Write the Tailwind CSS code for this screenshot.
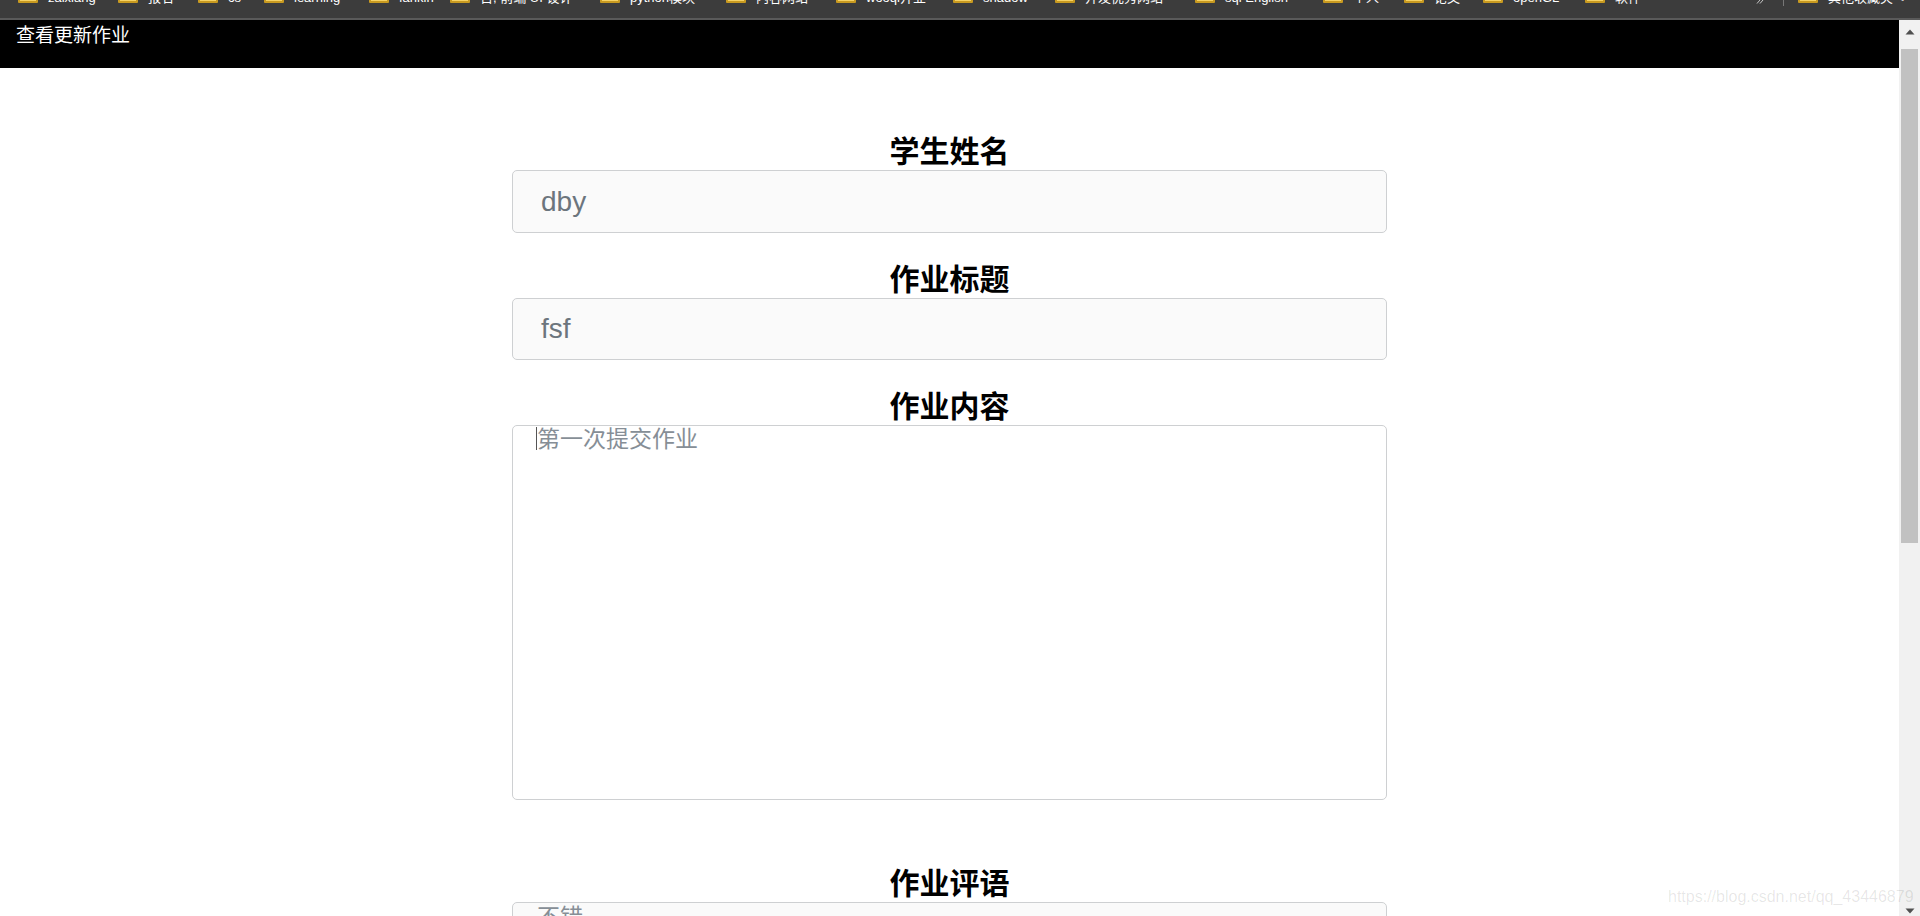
<!doctype html>
<html lang="zh">
<head>
<meta charset="utf-8">
<title>查看更新作业</title>
<script src="https://cdn.jsdelivr.net/npm/@tailwindcss/browser@4"></script>
</head>
<body class="bg-white overflow-hidden font-['Liberation_Sans','Noto_Sans_CJK_SC',sans-serif]">
<div class="relative h-[916px] w-[1920px] overflow-hidden flex flex-col">
  <!-- browser bookmark bar -->
  <div class="h-[20px] shrink-0 bg-[#3c3c3c] border-b-2 border-[#5a5a5a] overflow-hidden flex pl-[18px] text-[13px] text-white">
    <div class="w-[100px] h-[20px] -mt-[17px] flex items-end gap-2.5 shrink-0"><span class="w-5 h-4 shrink-0 bg-[#f6d263] border-2 border-[#c89a20] rounded-[1px]"></span><span class="leading-[20px] -mb-[5px] whitespace-nowrap">zaixiang</span></div>
    <div class="w-[80px] h-[20px] -mt-[17px] flex items-end gap-2.5 shrink-0"><span class="w-5 h-4 shrink-0 bg-[#f6d263] border-2 border-[#c89a20] rounded-[1px]"></span><span class="leading-[20px] -mb-[5px] whitespace-nowrap">报名</span></div>
    <div class="w-[66px] h-[20px] -mt-[17px] flex items-end gap-2.5 shrink-0"><span class="w-5 h-4 shrink-0 bg-[#f6d263] border-2 border-[#c89a20] rounded-[1px]"></span><span class="leading-[20px] -mb-[5px] whitespace-nowrap">cs</span></div>
    <div class="w-[105px] h-[20px] -mt-[17px] flex items-end gap-2.5 shrink-0"><span class="w-5 h-4 shrink-0 bg-[#f6d263] border-2 border-[#c89a20] rounded-[1px]"></span><span class="leading-[20px] -mb-[5px] whitespace-nowrap">learning</span></div>
    <div class="w-[81px] h-[20px] -mt-[17px] flex items-end gap-2.5 shrink-0"><span class="w-5 h-4 shrink-0 bg-[#f6d263] border-2 border-[#c89a20] rounded-[1px]"></span><span class="leading-[20px] -mb-[5px] whitespace-nowrap">fankin</span></div>
    <div class="w-[150px] h-[20px] -mt-[17px] flex items-end gap-2.5 shrink-0"><span class="w-5 h-4 shrink-0 bg-[#f6d263] border-2 border-[#c89a20] rounded-[1px]"></span><span class="leading-[20px] -mb-[5px] whitespace-nowrap">百, 前端 UI 设计</span></div>
    <div class="w-[126px] h-[20px] -mt-[17px] flex items-end gap-2.5 shrink-0"><span class="w-5 h-4 shrink-0 bg-[#f6d263] border-2 border-[#c89a20] rounded-[1px]"></span><span class="leading-[20px] -mb-[5px] whitespace-nowrap">python模块</span></div>
    <div class="w-[110px] h-[20px] -mt-[17px] flex items-end gap-2.5 shrink-0"><span class="w-5 h-4 shrink-0 bg-[#f6d263] border-2 border-[#c89a20] rounded-[1px]"></span><span class="leading-[20px] -mb-[5px] whitespace-nowrap">内容网站</span></div>
    <div class="w-[117px] h-[20px] -mt-[17px] flex items-end gap-2.5 shrink-0"><span class="w-5 h-4 shrink-0 bg-[#f6d263] border-2 border-[#c89a20] rounded-[1px]"></span><span class="leading-[20px] -mb-[5px] whitespace-nowrap">wooqi开业</span></div>
    <div class="w-[102px] h-[20px] -mt-[17px] flex items-end gap-2.5 shrink-0"><span class="w-5 h-4 shrink-0 bg-[#f6d263] border-2 border-[#c89a20] rounded-[1px]"></span><span class="leading-[20px] -mb-[5px] whitespace-nowrap">shadow</span></div>
    <div class="w-[140px] h-[20px] -mt-[17px] flex items-end gap-2.5 shrink-0"><span class="w-5 h-4 shrink-0 bg-[#f6d263] border-2 border-[#c89a20] rounded-[1px]"></span><span class="leading-[20px] -mb-[5px] whitespace-nowrap">开发优秀网站</span></div>
    <div class="w-[128px] h-[20px] -mt-[17px] flex items-end gap-2.5 shrink-0"><span class="w-5 h-4 shrink-0 bg-[#f6d263] border-2 border-[#c89a20] rounded-[1px]"></span><span class="leading-[20px] -mb-[5px] whitespace-nowrap">sql English</span></div>
    <div class="w-[81px] h-[20px] -mt-[17px] flex items-end gap-2.5 shrink-0"><span class="w-5 h-4 shrink-0 bg-[#f6d263] border-2 border-[#c89a20] rounded-[1px]"></span><span class="leading-[20px] -mb-[5px] whitespace-nowrap">个人</span></div>
    <div class="w-[79px] h-[20px] -mt-[17px] flex items-end gap-2.5 shrink-0"><span class="w-5 h-4 shrink-0 bg-[#f6d263] border-2 border-[#c89a20] rounded-[1px]"></span><span class="leading-[20px] -mb-[5px] whitespace-nowrap">论文</span></div>
    <div class="w-[102px] h-[20px] -mt-[17px] flex items-end gap-2.5 shrink-0"><span class="w-5 h-4 shrink-0 bg-[#f6d263] border-2 border-[#c89a20] rounded-[1px]"></span><span class="leading-[20px] -mb-[5px] whitespace-nowrap">openGL</span></div>
    <div class="w-[171px] h-[20px] -mt-[17px] flex items-end gap-2.5 shrink-0"><span class="w-5 h-4 shrink-0 bg-[#f6d263] border-2 border-[#c89a20] rounded-[1px]"></span><span class="leading-[20px] -mb-[5px] whitespace-nowrap">软件</span></div>
    <svg class="shrink-0" width="9" height="4" viewBox="0 0 9 4"><path d="M1 3.5 L4 0 M4 3.5 L7 0" stroke="#c8c8c8" stroke-width="1" fill="none"/></svg>
    <div class="w-px h-[6px] bg-[#777777] shrink-0 ml-[18px] mr-[14px]"></div>
    <div class="h-[20px] -mt-[17px] flex items-end gap-2.5 shrink-0"><span class="w-5 h-4 shrink-0 bg-[#f6d263] border-2 border-[#c89a20] rounded-[1px]"></span><span class="leading-[20px] -mb-[5px] whitespace-nowrap">其他收藏夹 &lt;</span></div>
  </div>

  <div class="flex-1 flex min-h-0">
    <!-- page -->
    <div class="flex-1 min-w-0 flex flex-col">
      <header class="h-[48px] shrink-0 bg-black text-white text-[19px] leading-[28px] pl-4 pt-[2px]">查看更新作业</header>
      <main class="w-[875px] mx-auto flex flex-col pt-[66px] shrink-0 text-center">
        <h2 class="h-[36px] text-[30px] leading-[36px] font-bold text-black">学生姓名</h2>
        <div class="h-[63px] bg-[#fafafa] border border-[#ced0d2] rounded-[5px] flex items-center pl-[28px] text-[28px] text-[#6c757d]">dby</div>
        <h2 class="h-[36px] mt-[29px] text-[30px] leading-[36px] font-bold text-black">作业标题</h2>
        <div class="h-[62px] bg-[#fafafa] border border-[#ced0d2] rounded-[5px] flex items-center pl-[28px] text-[28px] text-[#6c757d]">fsf</div>
        <h2 class="h-[36px] mt-[29px] text-[30px] leading-[36px] font-bold text-black">作业内容</h2>
        <div class="h-[375px] bg-white border border-[#ced0d2] rounded-[5px] flex items-start pl-[23px] text-[23px] leading-[26px] text-[#868e96]"><span class="w-px h-[23px] mt-[1px] bg-[#555555]"></span><span>第一次提交作业</span></div>
        <h2 class="h-[36px] mt-[66px] text-[30px] leading-[36px] font-bold text-black">作业评语</h2>
        <div class="h-[62px] bg-[#fafafa] border border-[#ced0d2] rounded-[5px] flex items-start pl-[24px] pt-[1px] text-[23px] leading-[26px] text-[#868e96]">不错</div>
      </main>
    </div>
    <!-- scrollbar -->
    <div class="w-[21px] shrink-0 bg-[#f1f1f1] flex flex-col items-center">
      <svg class="mt-[9px] shrink-0" width="10" height="6" viewBox="0 0 10 6"><path d="M5 0.5 L9.5 5.5 H0.5 Z" fill="#505050"/></svg>
      <div class="mt-[14px] w-[17px] h-[494px] shrink-0 bg-[#c1c1c1]"></div>
      <svg class="mt-auto mb-[2px] shrink-0" width="10" height="6" viewBox="0 0 10 6"><path d="M0.5 0.5 H9.5 L5 5.5 Z" fill="#505050"/></svg>
    </div>
  </div>

  <!-- image watermark over the picture -->
  <div class="absolute left-[1668px] top-[887px] text-[16px] leading-[20px] text-black/10 whitespace-nowrap">https://blog.csdn.net/qq_43446879</div>
</div>
</body>
</html>
